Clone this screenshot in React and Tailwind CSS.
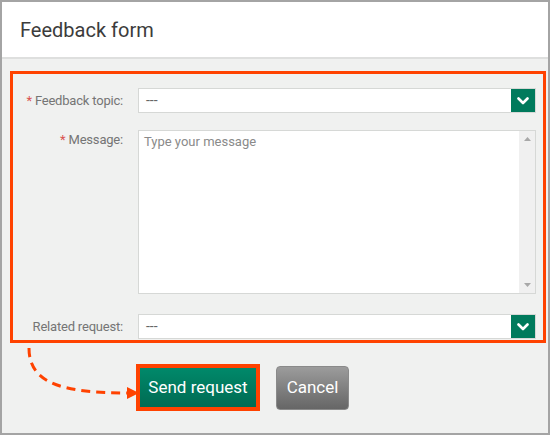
import React from 'react';

function Chevron() {
  return (
    <svg width="12" height="8" viewBox="0 0 12 8">
      <path d="M1.5 1.5 L6 6 L10.5 1.5" fill="none" stroke="#fff" strokeWidth="2.6" strokeLinecap="round" strokeLinejoin="round" />
    </svg>
  );
}

function SelectBox({ value }) {
  return (
    <div className="flex h-[25px] flex-1 items-stretch border border-[#d6d8d6] bg-white">
      <div className="flex flex-1 items-center pl-[7px] text-[14px] text-[#666]">{value}</div>
      <div className="flex w-[24px] items-center justify-center bg-[#007a5c]">
        <Chevron />
      </div>
    </div>
  );
}

function Label({ children, required }) {
  return (
    <div className="w-[110px] shrink-0 text-right text-[13px] leading-[16px] tracking-[-0.2px] text-[#757575]">
      {required && <span className="mr-[3px] text-[#d9534f]">*</span>}
      {children}
    </div>
  );
}

export default function App() {
  return (
    <div
      className="relative flex h-[435px] w-[550px] flex-col border-2 border-[#a4a4a4] bg-[#f0f1f0]"
      style={{ fontFamily: 'Roboto, "Liberation Sans", sans-serif' }}
    >
      {/* header */}
      <div className="flex h-[57px] items-center border-b-2 border-[#dedfde] bg-white pl-[18px]">
        <h1 className="text-[20px] text-[#3c3c3c]">Feedback form</h1>
      </div>

      {/* form fields */}
      <div className="ml-[8px] mr-[2px] mt-[12px] flex flex-col border-[3px] border-[#ff4200] pb-[1px] pr-[7px] pt-[14px]">
        <div className="flex items-center gap-[15px]">
          <Label required>Feedback topic:</Label>
          <SelectBox value="---" />
        </div>

        <div className="mt-[17px] flex gap-[15px]">
          <div className="pt-[2px]">
            <Label required>Message:</Label>
          </div>
          <div className="flex h-[164px] flex-1 border border-[#d6d8d6] bg-white">
            <div className="flex-1 px-[5px] pt-[1px] text-[13px] text-[#8a8a8a]">Type your message</div>
            <div className="flex w-[16px] flex-col items-center justify-between bg-[#f0f0f0] py-[6px]">
              <svg width="7" height="4" viewBox="0 0 7 4"><path d="M0 4 L3.5 0 L7 4 Z" fill="#a8a8a8" /></svg>
              <svg width="7" height="4" viewBox="0 0 7 4"><path d="M0 0 L3.5 4 L7 0 Z" fill="#a8a8a8" /></svg>
            </div>
          </div>
        </div>

        <div className="mt-[20px] flex items-center gap-[15px]">
          <Label>Related request:</Label>
          <SelectBox value="---" />
        </div>
      </div>

      {/* buttons */}
      <div className="mt-[21px] flex items-start pl-[134px]">
        <div className="border-[4px] border-[#ff4200]">
          <button className="h-[39px] w-[116px] bg-gradient-to-b from-[#00896a] to-[#006b53] text-[17px] text-white">
            Send request
          </button>
        </div>
        <button className="ml-[16px] mt-[2px] h-[44px] w-[73px] rounded-[4px] border border-[#8a8a8a] bg-gradient-to-b from-[#9c9c9c] to-[#666] text-[17px] text-white">
          Cancel
        </button>
      </div>

      {/* dashed arrow annotation */}
      <svg className="pointer-events-none absolute left-0 top-0" width="550" height="435" viewBox="-2 -2 550 435">
        <path d="M25 344 C25 378, 55 389, 124 389" fill="none" stroke="#ff4200" strokeWidth="3" strokeDasharray="9 6" />
        <polygon points="123,383 135,389 123,395" fill="#ff4200" />
      </svg>
    </div>
  );
}
